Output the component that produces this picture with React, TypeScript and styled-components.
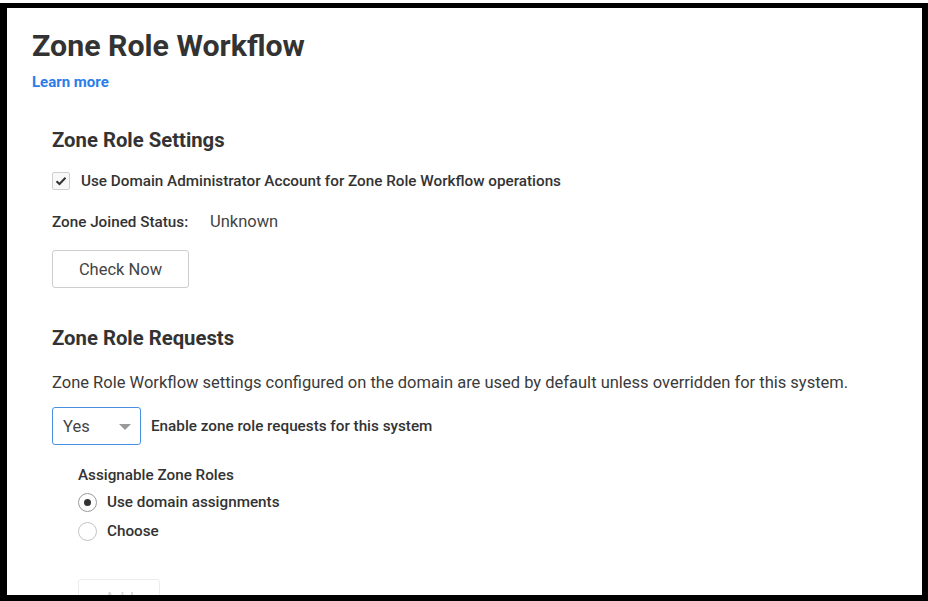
import React from "react";
import styled, { createGlobalStyle } from "styled-components";

const Global = createGlobalStyle`
  html, body { margin: 0; padding: 0; background: #fff; }
  body { font-family: Roboto, "Liberation Sans", Arial, sans-serif; color: #333; }
  * { box-sizing: border-box; }
`;

const Outer = styled.div`
  width: 928px;
  height: 601px;
  padding-top: 3px;
  background: #fff;
`;

const Frame = styled.div`
  height: 598px;
  border-style: solid;
  border-color: #000;
  border-width: 5px 6px 6px 7px;
  overflow: hidden;
  background: #fff;
`;

const Page = styled.div`
  padding: 21px 0 0 25px;
`;

const Title = styled.h1`
  margin: 0;
  font-size: 30.3px;
  line-height: 34px;
  font-weight: 700;
  color: #333;
`;

const LearnMore = styled.a`
  display: block;
  margin-top: 9px;
  font-size: 15px;
  line-height: 20px;
  font-weight: 700;
  color: #2b7de9;
  text-decoration: none;
`;

const Section = styled.section<{ $top: number }>`
  padding-left: 20px;
  margin-top: ${(p) => p.$top}px;
  display: flex;
  flex-direction: column;
  align-items: flex-start;
`;

const SectionTitle = styled.h2`
  margin: 0;
  font-size: 20.3px;
  line-height: 24px;
  font-weight: 700;
  color: #333;
`;

const CheckRow = styled.label`
  display: flex;
  align-items: center;
  gap: 11px;
  margin-top: 19px;
  font-size: 15.25px;
  line-height: 20px;
  font-weight: 500;
  color: #333;
`;

const CheckBox = styled.span`
  width: 18px;
  height: 18px;
  border: 1px solid #cfcfcf;
  border-radius: 2px;
  background: #f8f8f8;
  display: flex;
  align-items: center;
  justify-content: center;
`;

const StatusRow = styled.div`
  display: flex;
  align-items: baseline;
  margin-top: 21px;
  line-height: 20px;
`;

const StatusLabel = styled.span`
  width: 158px;
  font-size: 15.25px;
  font-weight: 500;
  color: #333;
`;

const StatusValue = styled.span`
  font-size: 16.5px;
  color: #444;
`;

const Button = styled.button<{ $disabled?: boolean }>`
  margin-top: ${(p) => (p.$disabled ? 38 : 18)}px;
  width: ${(p) => (p.$disabled ? 82 : 137)}px;
  height: 38px;
  border: 1px solid ${(p) => (p.$disabled ? "#ececec" : "#cdcdcd")};
  border-radius: 3px;
  background: #fff;
  font-family: Roboto, "Liberation Sans", Arial, sans-serif;
  font-size: 16.5px;
  color: ${(p) => (p.$disabled ? "#d4d4d4" : "#444")};
  padding: 0;
`;

const Paragraph = styled.p`
  margin: 22px 0 0;
  font-size: 16.5px;
  line-height: 22px;
  color: #3a3a3a;
`;

const SelectRow = styled.div`
  display: flex;
  align-items: center;
  gap: 10px;
  margin-top: 13px;
`;

const SelectBox = styled.div`
  width: 89px;
  height: 38px;
  border: 1px solid #4a90e2;
  border-radius: 3px;
  display: flex;
  align-items: center;
  justify-content: space-between;
  padding: 0 9px 0 10px;
  font-size: 16.5px;
  color: #444;
`;

const Caret = styled.span`
  width: 0;
  height: 0;
  border-left: 6px solid transparent;
  border-right: 6px solid transparent;
  border-top: 6px solid #999;
  margin-top: 2px;
`;

const InlineLabel = styled.span`
  font-size: 15.25px;
  font-weight: 500;
  color: #333;
`;

const SubGroup = styled.div`
  padding-left: 26px;
  margin-top: 20px;
  display: flex;
  flex-direction: column;
  align-items: flex-start;
`;

const SubLabel = styled.div`
  font-size: 15.25px;
  line-height: 20px;
  font-weight: 500;
  color: #333;
`;

const RadioRow = styled.label<{ $first?: boolean }>`
  display: flex;
  align-items: center;
  gap: 10px;
  margin-top: ${(p) => (p.$first ? 7 : 9)}px;
  font-size: 15.25px;
  line-height: 20px;
  font-weight: 500;
  color: #333;
`;

const Radio = styled.span<{ $on?: boolean }>`
  width: 19px;
  height: 19px;
  border-radius: 50%;
  border: 1px solid ${(p) => (p.$on ? "#9a9a9a" : "#c4c4c4")};
  display: flex;
  align-items: center;
  justify-content: center;
  &::after {
    content: "";
    width: 7px;
    height: 7px;
    border-radius: 50%;
    background: ${(p) => (p.$on ? "#333" : "transparent")};
  }
`;

export default function App() {
  return (
    <Outer>
      <Global />
      <Frame>
        <Page>
          <Title>Zone Role Workflow</Title>
          <LearnMore href="#">Learn more</LearnMore>

          <Section $top={36}>
            <SectionTitle>Zone Role Settings</SectionTitle>
            <CheckRow>
              <CheckBox>
                <svg width="12" height="10" viewBox="0 0 12 10">
                  <path d="M1.5 5.2 L4.5 8 L10.5 1.8" fill="none" stroke="#333" strokeWidth="2" />
                </svg>
              </CheckBox>
              Use Domain Administrator Account for Zone Role Workflow operations
            </CheckRow>
            <StatusRow>
              <StatusLabel>Zone Joined Status:</StatusLabel>
              <StatusValue>Unknown</StatusValue>
            </StatusRow>
            <Button>Check Now</Button>
          </Section>

          <Section $top={38}>
            <SectionTitle>Zone Role Requests</SectionTitle>
            <Paragraph>
              Zone Role Workflow settings configured on the domain are used by default unless overridden for this system.
            </Paragraph>
            <SelectRow>
              <SelectBox>
                Yes
                <Caret />
              </SelectBox>
              <InlineLabel>Enable zone role requests for this system</InlineLabel>
            </SelectRow>
            <SubGroup>
              <SubLabel>Assignable Zone Roles</SubLabel>
              <RadioRow $first>
                <Radio $on />
                Use domain assignments
              </RadioRow>
              <RadioRow>
                <Radio />
                Choose
              </RadioRow>
              <Button $disabled>Add</Button>
            </SubGroup>
          </Section>
        </Page>
      </Frame>
    </Outer>
  );
}
